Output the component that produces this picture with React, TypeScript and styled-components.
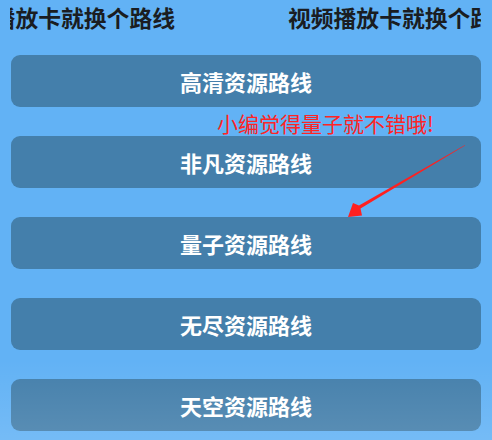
import styled, { createGlobalStyle } from 'styled-components'

const GlobalStyle = createGlobalStyle`
  html, body {
    margin: 0;
    padding: 0;
    background: #62b2f5;
  }
  body {
    font-family: "Noto Sans CJK SC", "Noto Sans", sans-serif;
  }
`

const Page = styled.div`
  position: relative;
  width: 492px;
  height: 440px;
  overflow: hidden;
  background: #62b2f5;
  &::after {
    content: '';
    position: absolute;
    left: 0;
    right: 0;
    bottom: 0;
    height: 80px;
    background: linear-gradient(rgba(255, 255, 255, 0), rgba(255, 255, 255, 0.12));
    pointer-events: none;
  }
`

const Marquee = styled.div`
  height: 36px;
  margin: 0 11px 0 10px;
  overflow: hidden;
  white-space: nowrap;
`

const Track = styled.div`
  display: flex;
  gap: 113px;
  margin-left: -63px;
`

const Notice = styled.span`
  font-size: 22.8px;
  line-height: 36px;
  font-weight: 700;
  color: #1a1d22;
`

const List = styled.div`
  display: flex;
  flex-direction: column;
  gap: 29px;
  padding: 19px 11px 0;
`

const Line = styled.div`
  height: 52px;
  border-radius: 9px;
  background: #447fab;
  color: #fff;
  font-size: 22px;
  font-weight: 700;
  display: flex;
  align-items: center;
  justify-content: center;
`

const Tip = styled.div`
  position: absolute;
  left: 217px;
  top: 109px;
  font-size: 21px;
  line-height: 28px;
  color: #ff2424;
  white-space: nowrap;
`

const Arrow = styled.svg`
  position: absolute;
  left: 0;
  top: 0;
  pointer-events: none;
`

const lines = ['高清资源路线', '非凡资源路线', '量子资源路线', '无尽资源路线', '天空资源路线']
const notice = '视频播放卡就换个路线'

export default function App() {
  return (
    <Page>
      <GlobalStyle />
      <Marquee>
        <Track>
          <Notice>{notice}</Notice>
          <Notice>{notice}</Notice>
        </Track>
      </Marquee>
      <List>
        {lines.map((l) => (
          <Line key={l}>{l}</Line>
        ))}
      </List>
      <Tip>小编觉得量子就不错哦!</Tip>
      <Arrow width="492" height="440" viewBox="0 0 492 440">
        <polygon
          points="465,145 359,205.5 353,203 348,217 362,215.5 360.5,208.5 465,145.6"
          fill="#ff2020"
        />
      </Arrow>
    </Page>
  )
}
